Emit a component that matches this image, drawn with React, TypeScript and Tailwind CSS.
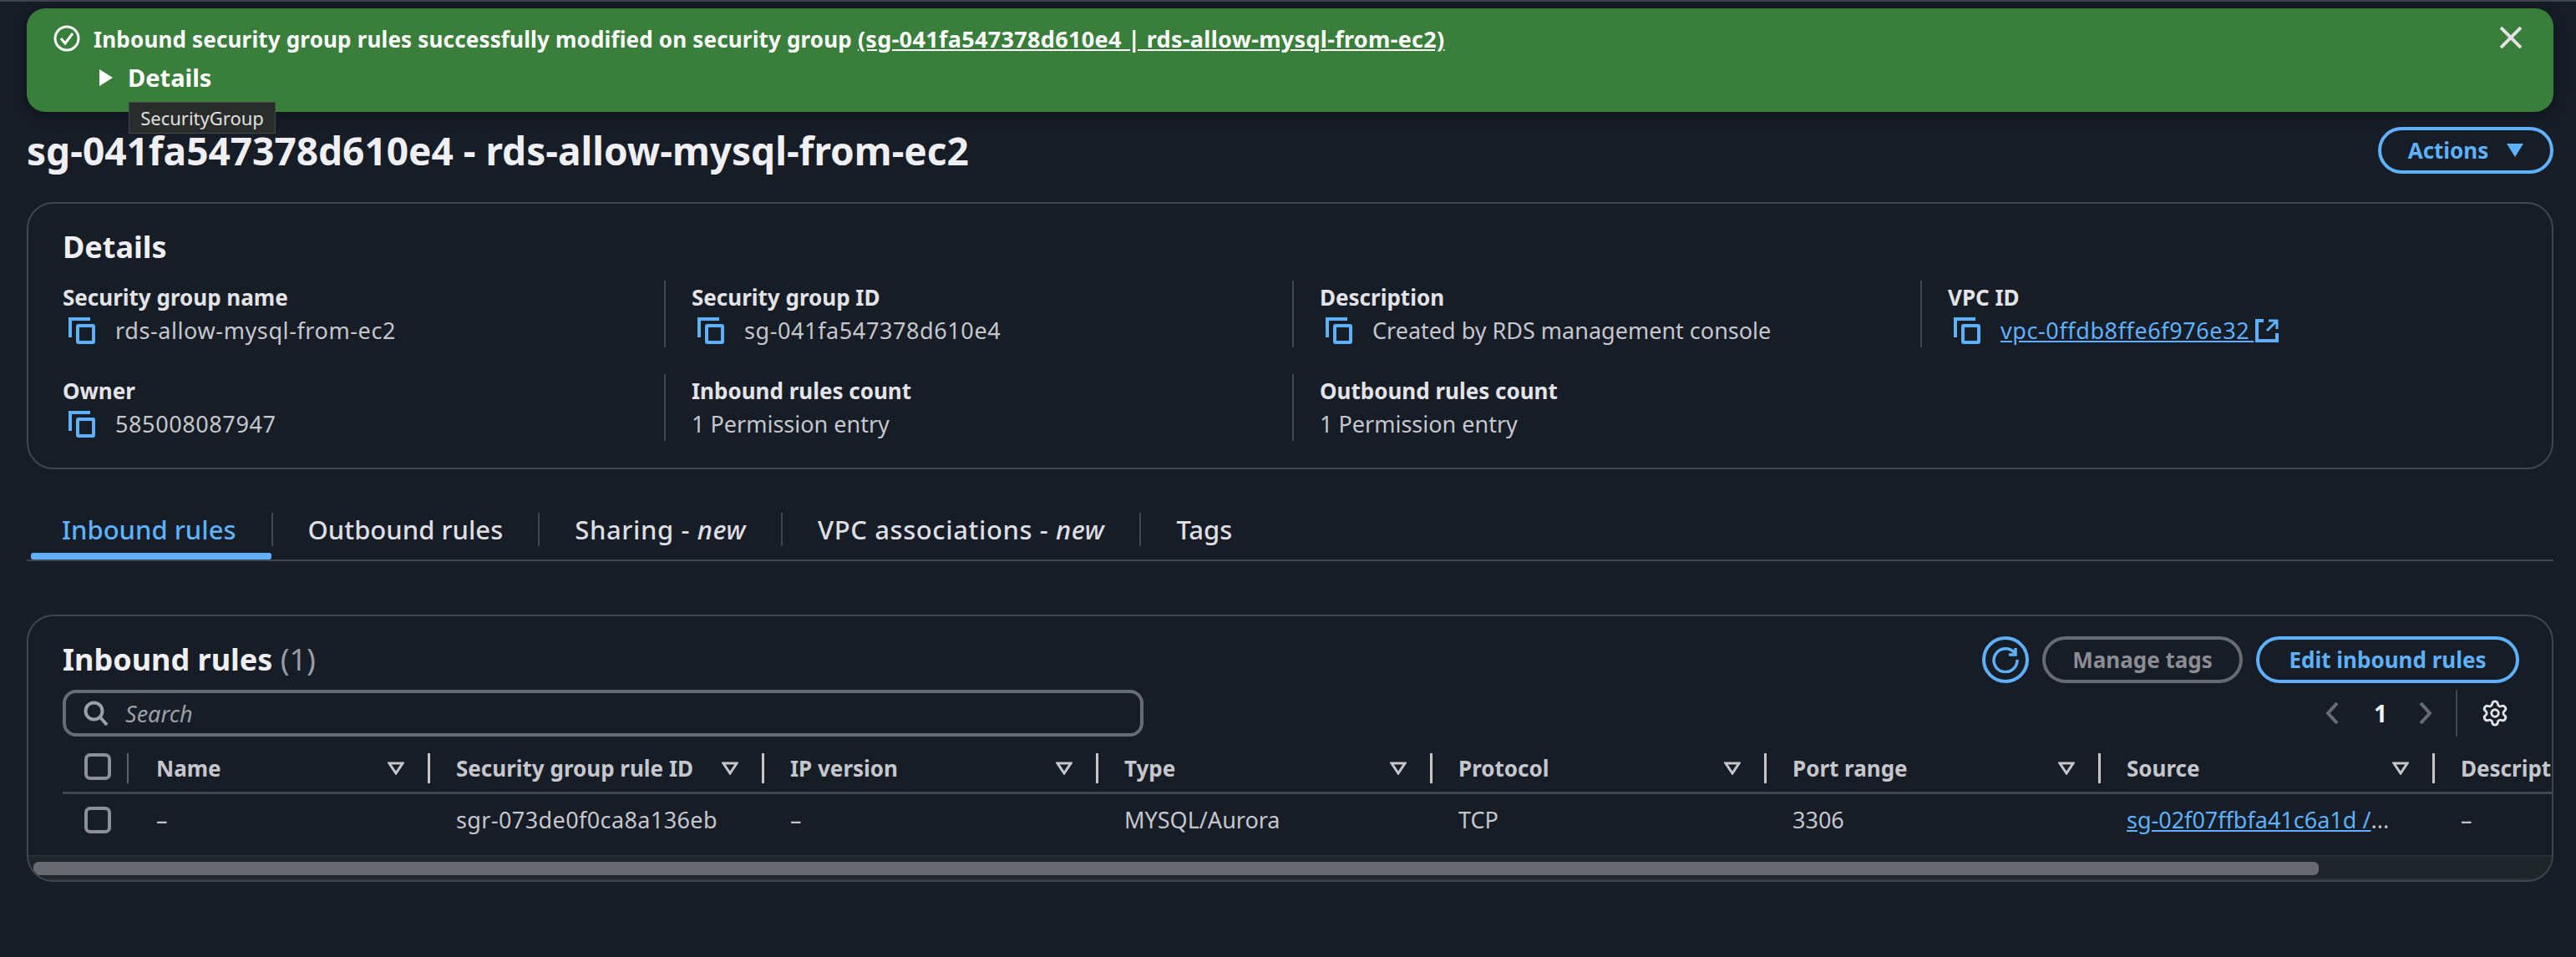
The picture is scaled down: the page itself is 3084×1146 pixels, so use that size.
import { Settings } from "lucide-react";

const FONT = "font-['Noto_Sans',sans-serif]";
const COL_W = "w-[400px]";

function CopyIcon() {
  return (
    <svg width="32" height="32" viewBox="0 0 32 32" fill="none" stroke="#5eb1fa" strokeWidth="4" className="shrink-0">
      <path d="M2 24V2h24" />
      <rect x="11" y="10" width="19" height="20" rx="1" />
    </svg>
  );
}

function ExternalIcon() {
  return (
    <svg width="28" height="28" viewBox="0 0 28 28" fill="none" stroke="#5eb1fa" strokeWidth="4" className="shrink-0">
      <path d="M10 2H2v24h24v-9" />
      <path d="M14 14L25 3M16 2h10v10" strokeWidth="3" />
    </svg>
  );
}

function SortDown() {
  return (
    <svg width="20" height="16" viewBox="0 0 20 16" fill="none" stroke="#c6c6cd" strokeWidth="3" className="shrink-0">
      <path d="M2 2h16l-8 12z" />
    </svg>
  );
}

function Field({
  label,
  value,
  copy,
  link,
  first,
  mono,
}: {
  label: string;
  value: string;
  copy?: boolean;
  link?: boolean;
  first?: boolean;
  mono?: boolean;
}) {
  return (
    <div className={first ? "h-[80px] w-[752px] pl-[32px]" : "h-[80px] w-[752px] border-l-2 border-[#414750] pl-[31px]"}>
      <div className="text-[26px] leading-[40px] font-bold text-[#e3e3e8]">{label}</div>
      <div className={(mono ? "tracking-[0.6px] " : "") + "flex h-[40px] items-center text-[27px] text-[#c6c6cd]"}>
        {copy ? (
          <span className="mr-[24px] ml-[7px]">
            <CopyIcon />
          </span>
        ) : null}
        {link ? (
          <>
            <span className="whitespace-pre text-[#5eb1fa] underline">{value + "\u2009"}</span>
            <span className="ml-[2px]">
              <ExternalIcon />
            </span>
          </>
        ) : (
          <span>{value}</span>
        )}
      </div>
    </div>
  );
}

function Tab({
  children,
  active,
  last,
  spaced,
}: {
  children: React.ReactNode;
  active?: boolean;
  last?: boolean;
  spaced?: boolean;
}) {
  return (
    <div className="relative flex h-[58px] items-start pt-[2px]">
      <div
        className={
          (active ? "text-[#5eb1fa] " : "text-[#dedee3] ") +
          (spaced ? "tracking-[0.6px] " : "") +
          "flex h-[40px] items-center px-[42px] text-[31px] font-medium " +
          (last ? "" : "border-r-2 border-[#414750]")
        }
      >
        {children}
      </div>
      {active ? <div className="absolute right-[2px] bottom-0 left-[5px] h-[8px] rounded-[3px] bg-[#5eb1fa]" /> : null}
    </div>
  );
}

function HeadCell({ label, wide }: { label: string; wide?: boolean }) {
  return (
    <div
      className={
        (wide ? "w-[360px] border-[#5f6269] border-l-2 pl-[33px]" : COL_W + " border-[#c6c6cd] border-l-[3px] pl-[31px]") +
        " flex h-[36px] shrink-0 items-center justify-between pr-[28px] text-[26px] font-bold text-[#c6c6cd]"
      }
    >
      <span>{label}</span>
      <SortDown />
    </div>
  );
}

function BodyCell({ children, wide }: { children: React.ReactNode; wide?: boolean }) {
  return (
    <div className={(wide ? "w-[360px] pl-[35px]" : COL_W + " pl-[34px]") + " shrink-0 truncate text-[27px] text-[#c6c6cd]"}>
      {children}
    </div>
  );
}

function Checkbox() {
  return <div className="ml-[26px] h-[32px] w-[32px] rounded-[7px] border-4 border-[#8d9099]" />;
}

export default function App() {
  return (
    <div className={FONT + " h-[1146px] w-[3084px] overflow-hidden bg-[#161d26]"}>
      <div className="h-[2px] bg-[#3f434d]" />
      <div className="box-content w-[3025px] pl-[32px]">
        {/* flash */}
        <div className="relative mt-[8px] flex h-[124px] w-[3025px] rounded-[22px] bg-[#397e3b] pt-[20px] pl-[32px] text-white shadow-[0_4px_16px_rgba(0,0,0,0.35)]">
          <svg width="32" height="32" viewBox="0 0 32 32" fill="none" stroke="white" strokeWidth="3" className="shrink-0">
            <circle cx="16" cy="16" r="14" />
            <path d="M9 16l5 6 9-12" />
          </svg>
          <div className="ml-[16px]">
            <div className="text-[26px] leading-[34px] font-bold tracking-[0.17px]">
              Inbound security group rules successfully modified on security group{" "}
              <span className="text-[27px] tracking-[0.33px] underline">(sg-041fa547378d610e4 | rds-allow-mysql-from-ec2)</span>
            </div>
            <div className="mt-[12px] flex items-center text-[29px] leading-[34px] font-bold">
              <svg width="18" height="20" viewBox="0 0 18 20" fill="white" className="ml-[6px] shrink-0">
                <path d="M1 0l16 10L1 20z" />
              </svg>
              <span className="ml-[17px]">Details</span>
            </div>
          </div>
          <svg width="26" height="26" viewBox="0 0 26 26" stroke="#e3e3e6" strokeWidth="4" className="absolute top-[22px] right-[38px]">
            <path d="M1 1l24 24M25 1L1 25" />
          </svg>
          <div className="absolute top-[112px] left-[122px] z-10 flex h-[38px] w-[176px] items-center justify-center border border-[#45474a] bg-[#2a2c2c] text-[22px] text-[#e0e0e0]">
            SecurityGroup
          </div>
        </div>

        {/* page header */}
        <div className="mt-[18px] flex h-[56px] items-center justify-between">
          <h1 className="text-[46px] font-bold text-[#f0f0f4]">sg-041fa547378d610e4 - rds-allow-mysql-from-ec2</h1>
          <button className="flex h-[56px] w-[210px] items-center justify-center gap-[22px] rounded-full border-4 border-[#5eb1fa] text-[26px] font-bold text-[#5eb1fa]">
            Actions
            <svg width="20" height="16" viewBox="0 0 20 16" fill="#5eb1fa">
              <path d="M0 0h20L10 16z" />
            </svg>
          </button>
        </div>

        {/* details card */}
        <div className="mt-[34px] h-[320px] rounded-[32px] border-2 border-[#414750] pt-[30px]">
          <h2 className="pl-[41px] text-[36px] leading-[44px] font-bold text-[#f0f0f4]">Details</h2>
          <div className="mt-[18px] ml-[9px] grid grid-cols-[repeat(4,752px)] gap-y-[32px]">
            <Field first mono label="Security group name" value="rds-allow-mysql-from-ec2" copy />
            <Field mono label="Security group ID" value="sg-041fa547378d610e4" copy />
            <Field label="Description" value="Created by RDS management console" copy />
            <Field mono label="VPC ID" value="vpc-0ffdb8ffe6f976e32" copy link />
            <Field first mono label="Owner" value="585008087947" copy />
            <Field label="Inbound rules count" value="1 Permission entry" />
            <Field label="Outbound rules count" value="1 Permission entry" />
          </div>
        </div>

        {/* tabs */}
        <div className="mt-[50px] flex h-[60px] border-b-2 border-[#414750]">
          <Tab active>Inbound rules</Tab>
          <Tab>Outbound rules</Tab>
          <Tab spaced>
            Sharing -&nbsp;<i>new</i>
          </Tab>
          <Tab spaced>
            VPC associations -&nbsp;<i>new</i>
          </Tab>
          <Tab last>Tags</Tab>
        </div>

        {/* rules table card */}
        <div className="mt-[64px] h-[320px] overflow-hidden rounded-[32px] border-2 border-[#414750]">
          <div className="mt-[24px] flex h-[56px] items-center justify-between pr-[39px] pl-[41px]">
            <h2 className="text-[36px] font-bold text-[#f0f0f4]">
              Inbound rules <span className="font-normal text-[#9a9ca3]">(1)</span>
            </h2>
            <div className="flex items-center gap-[16px] text-[26px] font-bold">
              <button className="flex h-[56px] w-[56px] items-center justify-center rounded-full border-4 border-[#5eb1fa]">
                <svg width="32" height="32" viewBox="0 0 32 32" fill="none" stroke="#5eb1fa" strokeWidth="3.5">
                  <path d="M27 8A14 14 0 1 0 30 16" />
                  <path d="M28 2v8h-8" />
                </svg>
              </button>
              <button className="h-[56px] w-[240px] rounded-full border-4 border-[#686b73] text-[#8c8c94]">Manage tags</button>
              <button className="h-[56px] w-[315px] rounded-full border-4 border-[#5eb1fa] text-[#5eb1fa]">Edit inbound rules</button>
            </div>
          </div>

          <div className="mt-[8px] flex h-[56px] items-center justify-between pr-[51px] pl-[41px]">
            <div className="flex h-[56px] w-[1294px] items-center rounded-[16px] border-4 border-[#686b73] pl-[21px]">
              <svg width="30" height="30" viewBox="0 0 30 30" fill="none" stroke="#9ba0a8" strokeWidth="4" className="shrink-0">
                <circle cx="12.5" cy="12.5" r="10" />
                <path d="M20 20l8 9" />
              </svg>
              <span className="ml-[20px] pt-[2px] text-[27px] text-[#9ba0a8] italic">Search</span>
            </div>
            <div className="flex h-[56px] items-center">
              <svg width="16" height="26" viewBox="0 0 16 26" fill="none" stroke="#686b73" strokeWidth="4">
                <path d="M14 1L3 13l11 12" />
              </svg>
              <span className="mx-[42px] w-[12px] text-center text-[28px] font-bold text-[#f5f5f7]">1</span>
              <svg width="16" height="26" viewBox="0 0 16 26" fill="none" stroke="#686b73" strokeWidth="4">
                <path d="M2 1l11 12L2 25" />
              </svg>
              <div className="ml-[28px] flex h-[56px] items-center border-l-2 border-[#414750] pl-[28px]">
                <Settings size={34} color="#e3e3e8" strokeWidth={2} />
              </div>
            </div>
          </div>

          {/* table */}
          <div className="mt-[20px] ml-[41px] overflow-hidden">
            <div className="flex h-[49px] w-[3200px] items-start border-b-[3px] border-[#414750]">
              <div className="w-[77px] shrink-0">
                <Checkbox />
              </div>
              <HeadCell wide label="Name" />
              <HeadCell label="Security group rule ID" />
              <HeadCell label="IP version" />
              <HeadCell label="Type" />
              <HeadCell label="Protocol" />
              <HeadCell label="Port range" />
              <HeadCell label="Source" />
              <HeadCell label="Description" />
            </div>
            <div className="flex h-[73px] w-[3200px] items-center pb-[11px]">
              <div className="w-[77px] shrink-0">
                <Checkbox />
              </div>
              <BodyCell wide>–</BodyCell>
              <BodyCell>
                <span className="tracking-[0.4px]">sgr-073de0f0ca8a136eb</span>
              </BodyCell>
              <BodyCell>–</BodyCell>
              <BodyCell>MYSQL/Aurora</BodyCell>
              <BodyCell>TCP</BodyCell>
              <BodyCell>3306</BodyCell>
              <BodyCell>
                <span className="text-[#5eb1fa] underline">sg-02f07ffbfa41c6a1d /</span>...
              </BodyCell>
              <BodyCell>–</BodyCell>
            </div>
          </div>

          {/* horizontal scrollbar */}
          <div className="flex h-[30px] items-start border-t-2 border-b-2 border-[#2a2f37] bg-[#20252c] pt-[6px] pl-[6px]">
            <div className="h-[16px] w-[2736px] rounded-[6px] bg-[#676a6e]" />
          </div>
        </div>
      </div>
    </div>
  );
}
